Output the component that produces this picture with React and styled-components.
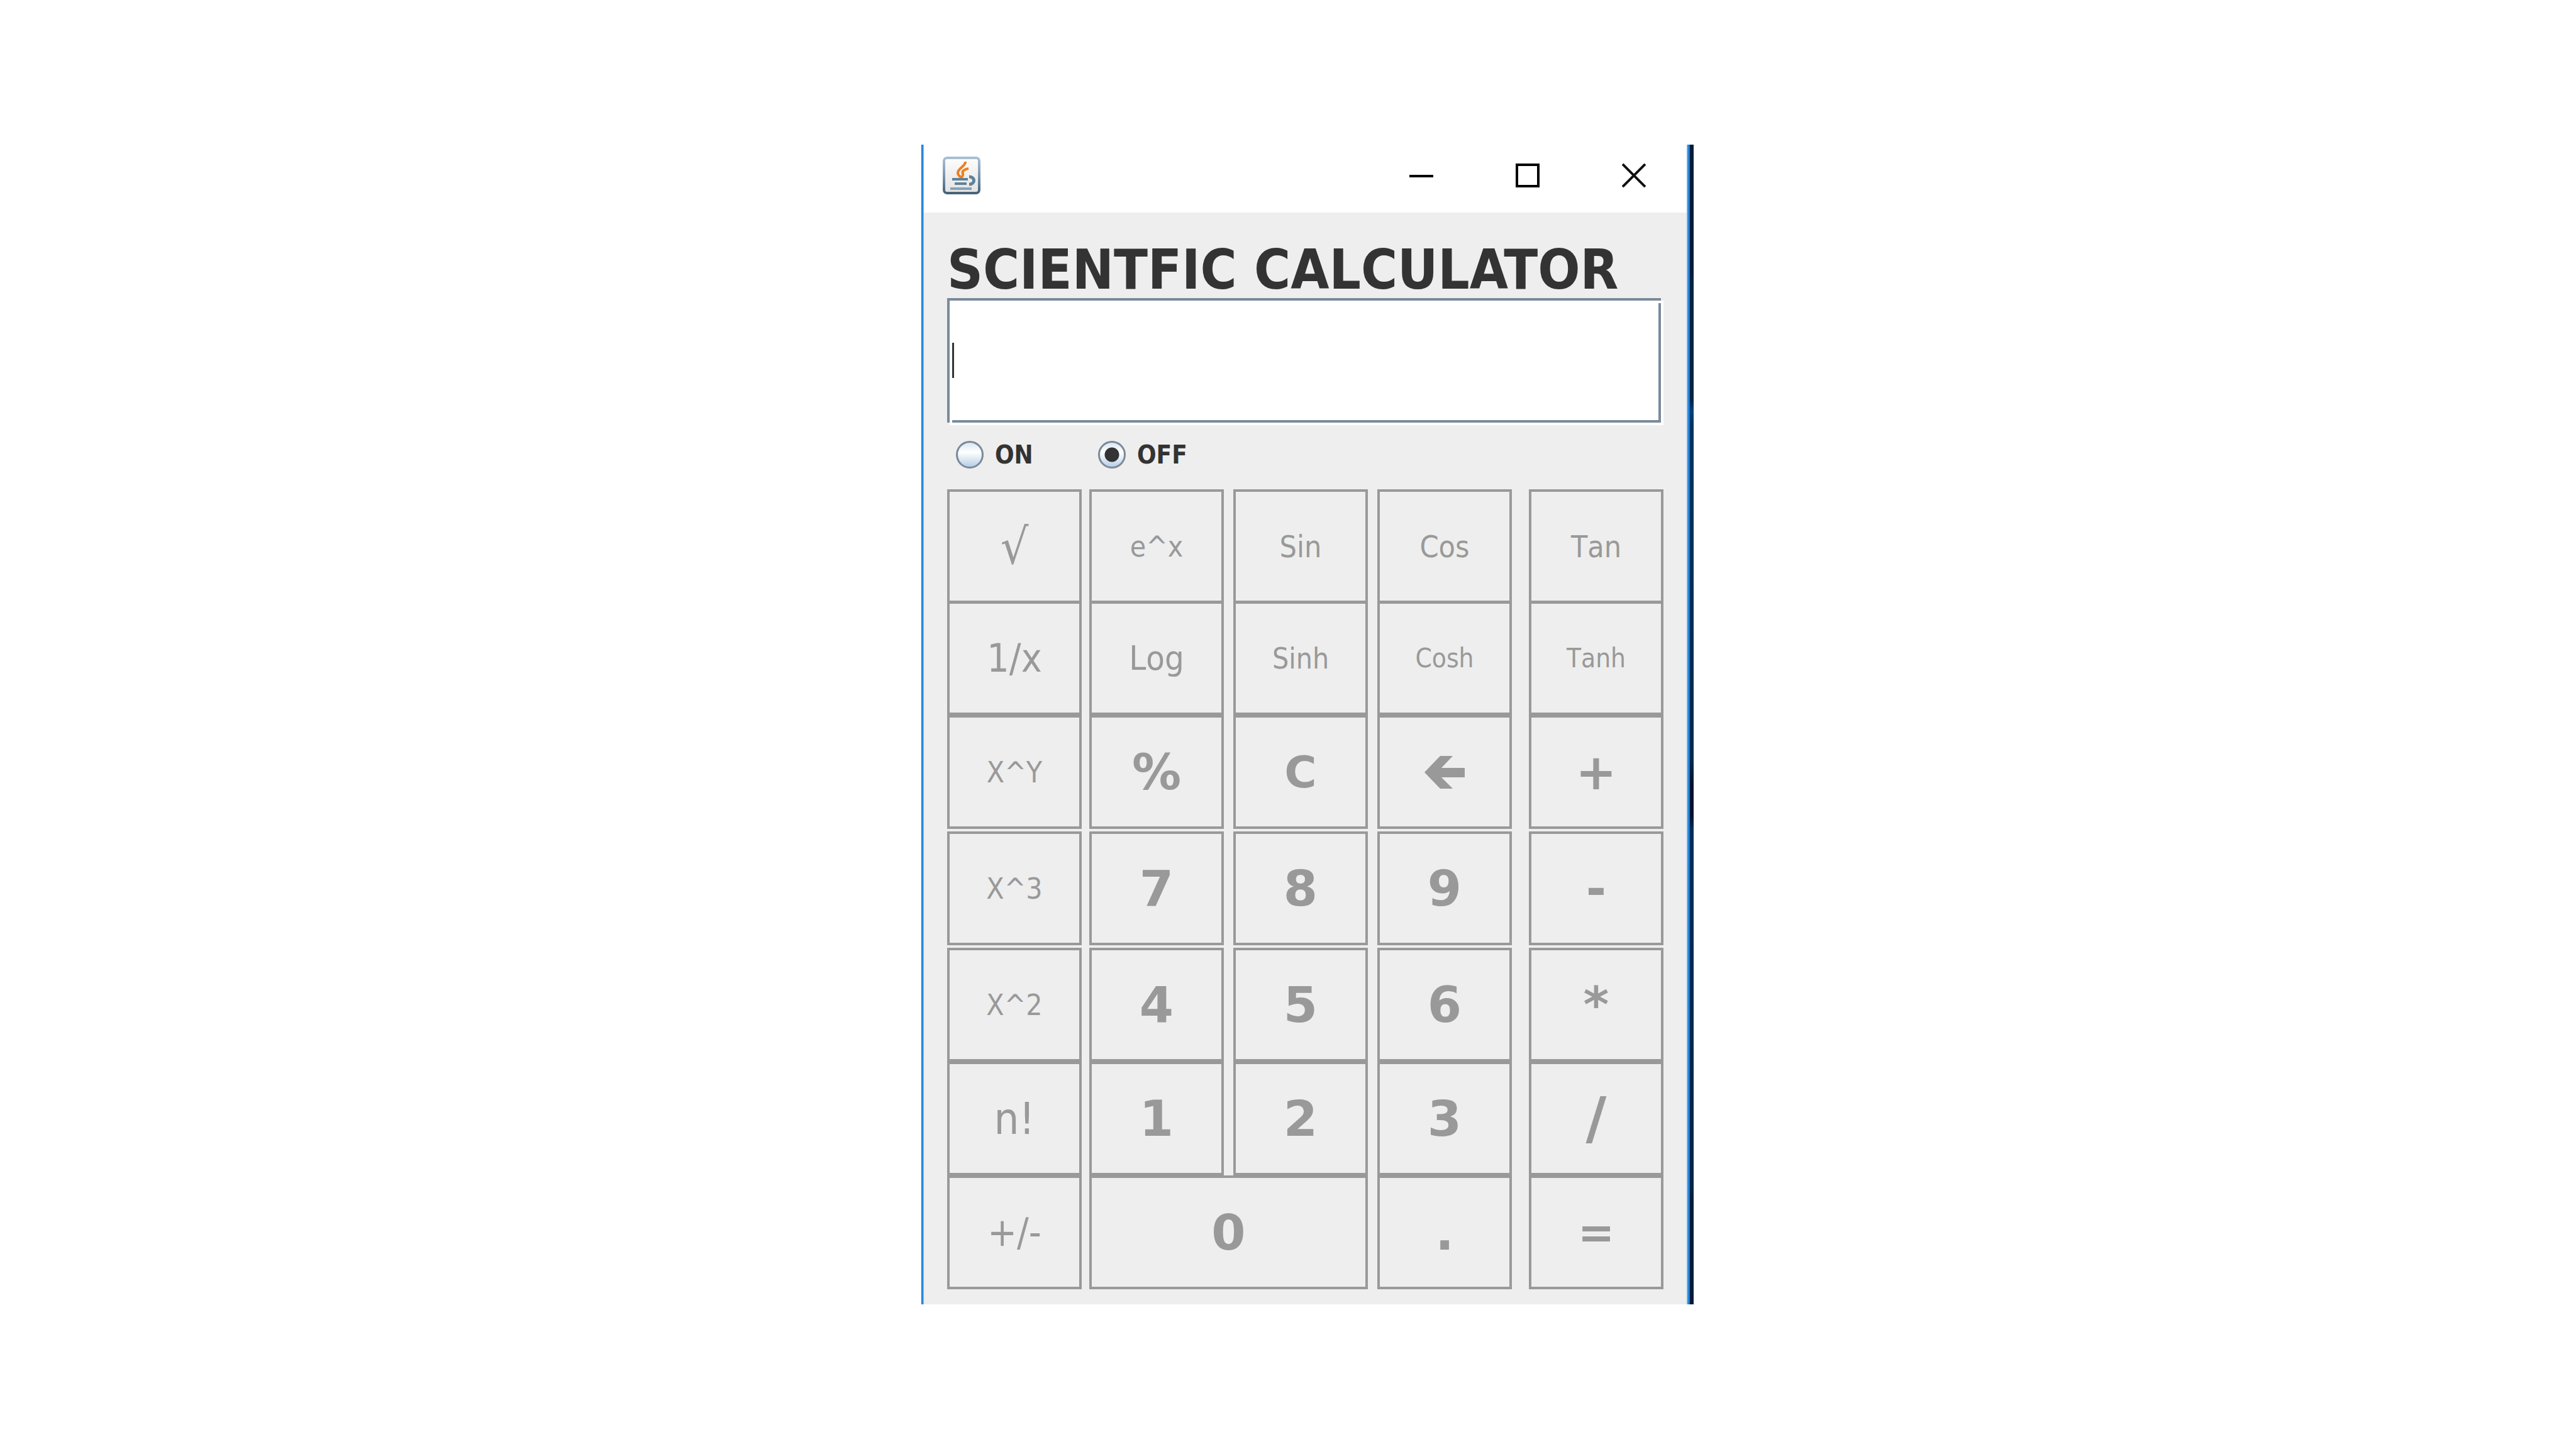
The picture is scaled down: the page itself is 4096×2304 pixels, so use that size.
import React from "react";
import styled, { createGlobalStyle } from "styled-components";

const GlobalStyle = createGlobalStyle`
  * { box-sizing: border-box; }
  body {
    margin: 0;
    background: #ffffff;
    font-family: "DejaVu Sans Condensed", "DejaVu Sans", sans-serif;
  }
`;

const Desktop = styled.main`
  min-height: 100vh;
  padding-left: 62px;
  display: flex;
  align-items: center;
  justify-content: center;
`;

const Window = styled.section`
  width: 100%;
  max-width: 1228px;
  display: flex;
  background: #eeeeee;
`;

const Frame = styled.div`
  flex: 1;
  min-width: 0;
`;

const Edge = styled.div`
  flex: none;
  width: ${(p) => p.$width}px;
  background: linear-gradient(${(p) => p.$direction}, #8cc4f2 0, #1a80d8 60%, #1272cc);
`;

const Backdrop = styled.div`
  flex: none;
  width: 6px;
  background: linear-gradient(
    180deg,
    #001c38 0%,
    #001c38 11%,
    #002344 12%,
    #002344 22%,
    #004280 23%,
    #003460 24%,
    #002a50 53%,
    #00142e 55%,
    #00142e 58%,
    #002f5c 59%,
    #002448 90%,
    #001c3a 91%,
    #001c3a 100%
  );
`;

const TitleBar = styled.header`
  height: 108px;
  padding: 0 0 10px 30px;
  display: flex;
  align-items: center;
  justify-content: space-between;
  background: #ffffff;
`;

const Controls = styled.div`
  display: flex;
`;

const ControlButton = styled.button`
  width: 169px;
  height: 98px;
  padding: 0;
  border: 0;
  background: transparent;
  display: flex;
  align-items: center;
  justify-content: center;
`;

const Body = styled.form`
  padding: 46px 37px 24px;
  display: flex;
  flex-direction: column;
`;

const Title = styled.h1`
  margin: 0;
  font: 700 88px/90px "DejaVu Sans Condensed", "DejaVu Sans", sans-serif;
  color: #333333;
  white-space: nowrap;
`;

const DisplayBox = styled.div`
  position: relative;
  height: 202px;
`;

const line = "linear-gradient(#7a8a99, #7a8a99)";
const Display = styled.input`
  display: block;
  width: 100%;
  height: 100%;
  padding: 0 12px;
  border: 0;
  outline: 0;
  font: 400 48px "DejaVu Sans Condensed", sans-serif;
  color: #333333;
  background:
    ${line} 0 0 / 4px 198px,
    ${line} 0 0 / calc(100% - 4px) 4px,
    ${line} calc(100% - 4px) 8px / 4px 190px,
    ${line} 8px 194px / calc(100% - 12px) 4px,
    linear-gradient(#ffffff, #ffffff) 4px 4px / calc(100% - 4px) 198px;
  background-repeat: no-repeat;
`;

const Caret = styled.span`
  position: absolute;
  left: 8px;
  top: 71px;
  width: 3px;
  height: 56px;
  background: #333333;
`;

const Power = styled.div`
  height: 94px;
  margin-bottom: 8px;
  padding-left: 14px;
  display: flex;
  align-items: center;
`;

const PowerOption = styled.label`
  min-width: 226px;
  display: flex;
  align-items: center;
  gap: 18px;
  font-size: 40px;
  font-weight: 700;
  color: #333333;
`;

const Radio = styled.input`
  appearance: none;
  flex: none;
  width: 44px;
  height: 44px;
  margin: 0;
  border: 3px solid #7a8a99;
  border-radius: 50%;
  background: linear-gradient(#dbe6f2, #ffffff 40%, #b8cfe5);

  &:checked {
    background:
      radial-gradient(circle, #333333 0 11px, transparent 12px),
      linear-gradient(#dbe6f2, #ffffff 40%, #b8cfe5);
  }
`;

const Keypad = styled.div`
  display: flex;
  flex-direction: column;
`;

const KeyRow = styled.div`
  display: grid;
  grid-template-columns: 214fr 12fr 214fr 15fr 214fr 15fr 214fr 27fr 214fr;
  margin-top: ${(p) => p.$offset}px;
`;

const Key = styled.button`
  grid-column: ${(p) => p.$column};
  height: 181px;
  padding: 0;
  border: 4px solid #999999;
  border-radius: 0;
  background: #eeeeee;
  color: #999999;
  display: flex;
  align-items: center;
  justify-content: center;
  font-family: ${(p) =>
    p.$bold ? '"DejaVu Sans", sans-serif' : '"DejaVu Sans Condensed", "DejaVu Sans", sans-serif'};
  font-weight: ${(p) => (p.$bold ? 700 : 400)};
  font-size: ${(p) => p.$size}px;
  font-kerning: none;
  white-space: nowrap;
`;

const JavaIcon = () => (
  <svg width="60" height="60" viewBox="0 0 60 60" aria-hidden="true">
    <defs>
      <linearGradient id="java-frame" x1="0" y1="0" x2="0" y2="1">
        <stop offset="0" stopColor="#a9bfd3" />
        <stop offset="0.5" stopColor="#7b97ae" />
        <stop offset="1" stopColor="#456379" />
      </linearGradient>
      <linearGradient id="java-face" x1="0" y1="0" x2="0" y2="1">
        <stop offset="0" stopColor="#fdfdfd" />
        <stop offset="1" stopColor="#e2e2e2" />
      </linearGradient>
    </defs>
    <rect x="2" y="2" width="56" height="56" rx="5" fill="url(#java-face)" stroke="url(#java-frame)" strokeWidth="4" />
    <path
      d="M36 8 C37 15 23 19 24 27 C25 31 28 31 29 34 M41 19 C35 20 30 23 32 27 C33 30 31 32 29 34"
      fill="none"
      stroke="#ee7f1c"
      strokeWidth="4"
      strokeLinejoin="round"
    />
    <g fill="none" stroke="#5f8199" strokeWidth="4">
      <path d="M15 36 H40" />
      <path d="M19 43 H38" />
      <path d="M12 51 H46" stroke="#86a1b5" />
      <path d="M42 32 C52 32 52 44 42 44" strokeWidth="5" />
    </g>
  </svg>
);

const MinimizeIcon = () => (
  <svg width="38" height="38" viewBox="0 0 38 38" aria-hidden="true">
    <path d="M0 20 H38" stroke="#000000" strokeWidth="4" />
  </svg>
);

const MaximizeIcon = () => (
  <svg width="38" height="38" viewBox="0 0 38 38" aria-hidden="true">
    <rect x="2" y="2" width="34" height="34" fill="none" stroke="#000000" strokeWidth="4" />
  </svg>
);

const CloseIcon = () => (
  <svg width="38" height="38" viewBox="0 0 38 38" aria-hidden="true">
    <path d="M1 1 L37 37 M37 1 L1 37" stroke="#111111" strokeWidth="4" />
  </svg>
);

const ArrowIcon = () => (
  <svg width="64" height="52" viewBox="0 0 64 52" aria-hidden="true">
    <path d="M0 26 L25 0 H45 L27 19 H64 V34 H27 L45 52 H25 Z" fill="#999999" />
  </svg>
);

const COLUMNS = ["1", "3", "5", "7", "9"];

const ROWS = [
  { offset: 0, keys: [["√", 78], ["e^x", 46], ["Sin", 48], ["Cos", 48], ["Tan", 48]] },
  { offset: -3, keys: [["1/x", 62], ["Log", 54], ["Sinh", 46], ["Cosh", 42], ["Tanh", 42]] },
  { offset: 0, keys: [["X^Y", 46], ["%", 78, true], ["C", 70, true], ["back", 70, true], ["+", 78, true]] },
  { offset: 4, keys: [["X^3", 46], ["7", 78, true], ["8", 78, true], ["9", 78, true], ["-", 78, true]] },
  { offset: 4, keys: [["X^2", 46], ["4", 78, true], ["5", 78, true], ["6", 78, true], ["*", 78, true]] },
  { offset: 0, keys: [["n!", 70], ["1", 78, true], ["2", 78, true], ["3", 78, true], ["/", 90, true]] },
  {
    offset: 0,
    columns: ["1", "3 / 6", "7", "9"],
    keys: [["+/-", 62], ["0", 78, true], [".", 78, true], ["=", 70, true]],
  },
];

export default function App() {
  return (
    <>
      <GlobalStyle />
      <Desktop>
        <Window>
          <Edge $width={4} $direction="270deg" />
          <Frame>
            <TitleBar>
              <JavaIcon />
              <Controls>
                <ControlButton type="button" aria-label="Minimize"><MinimizeIcon /></ControlButton>
                <ControlButton type="button" aria-label="Maximize"><MaximizeIcon /></ControlButton>
                <ControlButton type="button" aria-label="Close"><CloseIcon /></ControlButton>
              </Controls>
            </TitleBar>
            <Body onSubmit={(e) => e.preventDefault()}>
              <Title>SCIENTFIC CALCULATOR</Title>
              <DisplayBox>
                <Display type="text" aria-label="Display" />
                <Caret />
              </DisplayBox>
              <Power role="radiogroup" aria-label="Power">
                <PowerOption>
                  <Radio type="radio" name="power" value="on" />
                  ON
                </PowerOption>
                <PowerOption>
                  <Radio type="radio" name="power" value="off" defaultChecked />
                  OFF
                </PowerOption>
              </Power>
              <Keypad>
                {ROWS.map((row, r) => (
                  <KeyRow key={r} $offset={row.offset}>
                    {row.keys.map(([label, size, bold], i) => (
                      <Key
                        key={label}
                        type="button"
                        disabled
                        $column={(row.columns || COLUMNS)[i]}
                        $size={size}
                        $bold={bold}
                        aria-label={label === "back" ? "Backspace" : undefined}
                      >
                        {label === "back" ? <ArrowIcon /> : label}
                      </Key>
                    ))}
                  </KeyRow>
                ))}
              </Keypad>
            </Body>
          </Frame>
          <Edge $width={5} $direction="90deg" />
          <Backdrop />
        </Window>
      </Desktop>
    </>
  );
}
